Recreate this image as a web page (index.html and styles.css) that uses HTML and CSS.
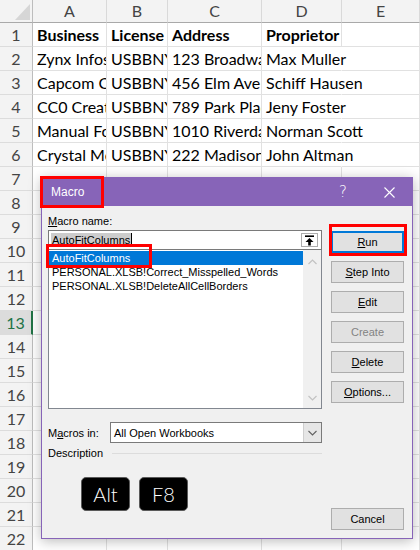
FILE: index.html
```html
<html>
<head>
    <meta charset="utf-8">
    <title>Macro</title>
    <link rel="stylesheet" href="styles.css">
</head>
<body>
	<div class="sheet">
		<div class="row head"><b class="corner"></b><span>A</span><span>B</span><span>C</span><span>D</span><span>E</span></div>
		<div class="row bold"><b class="rh">1</b><span>Business</span><span>License</span><span>Address</span><span>Proprietor</span><span></span></div>
		<div class="row"><b class="rh">2</b><span>Zynx Infosys</span><span>USBBNY</span><span>123 Broadway</span><span class="spill">Max Muller</span><span></span></div>
		<div class="row"><b class="rh">3</b><span>Capcom Co</span><span>USBBNY</span><span>456 Elm Ave</span><span class="spill">Schiff Hausen</span><span></span></div>
		<div class="row"><b class="rh">4</b><span>CC0 Creative</span><span>USBBNY</span><span>789 Park Place</span><span class="spill">Jeny Foster</span><span></span></div>
		<div class="row"><b class="rh">5</b><span>Manual Foods</span><span>USBBNY</span><span>1010 Riverdale</span><span class="spill">Norman Scott</span><span></span></div>
		<div class="row"><b class="rh">6</b><span>Crystal Media</span><span>USBBNY</span><span>222 Madison</span><span class="spill">John Altman</span><span></span></div>
		<div class="row"><b class="rh">7</b><span></span><span></span><span></span><span></span><span></span></div>
		<div class="row"><b class="rh">8</b><span></span><span></span><span></span><span></span><span></span></div>
		<div class="row"><b class="rh">9</b><span></span><span></span><span></span><span></span><span></span></div>
		<div class="row"><b class="rh">10</b><span></span><span></span><span></span><span></span><span></span></div>
		<div class="row"><b class="rh">11</b><span></span><span></span><span></span><span></span><span></span></div>
		<div class="row"><b class="rh">12</b><span></span><span></span><span></span><span></span><span></span></div>
		<div class="row"><b class="rh active">13</b><span></span><span></span><span></span><span></span><span></span></div>
		<div class="row"><b class="rh">14</b><span></span><span></span><span></span><span></span><span></span></div>
		<div class="row"><b class="rh">15</b><span></span><span></span><span></span><span></span><span></span></div>
		<div class="row"><b class="rh">16</b><span></span><span></span><span></span><span></span><span></span></div>
		<div class="row"><b class="rh">17</b><span></span><span></span><span></span><span></span><span></span></div>
		<div class="row"><b class="rh">18</b><span></span><span></span><span></span><span></span><span></span></div>
		<div class="row"><b class="rh">19</b><span></span><span></span><span></span><span></span><span></span></div>
		<div class="row"><b class="rh">20</b><span></span><span></span><span></span><span></span><span></span></div>
		<div class="row"><b class="rh">21</b><span></span><span></span><span></span><span></span><span></span></div>
		<div class="row"><b class="rh">22</b><span></span><span></span><span></span><span></span><span></span></div>
	</div>

	<div class="dialog">
		<div class="titlebar">
			<span class="title">Macro</span>
			<span class="tbtn help">?</span>
			<span class="tbtn close">
				<svg width="11" height="11" viewBox="0 0 11 11"><path d="M0.5 0.5L10.5 10.5M10.5 0.5L0.5 10.5" stroke="#fff" stroke-width="1.1" fill="none"/></svg>
			</span>
		</div>
		<div class="dlgbody">
			<div class="leftcol">
				<div class="label"><u>M</u>acro name:</div>
				<div class="namebox">
					<span class="sel">AutoFitColumns</span><span class="caret"></span>
					<span class="upbtn">
						<svg width="11" height="11" viewBox="0 0 11 11"><path d="M1 1.2H10" stroke="#000" stroke-width="1.6"/><path d="M5.5 3L1.5 7H4.2V10.5H6.8V7H9.5Z" fill="#000"/></svg>
					</span>
				</div>
				<div class="listbox">
					<div class="items">
						<div class="item on">AutoFitColumns</div>
						<div class="item">PERSONAL.XLSB!Correct_Misspelled_Words</div>
						<div class="item">PERSONAL.XLSB!DeleteAllCellBorders</div>
					</div>
					<div class="vscroll">
						<svg width="9" height="6" viewBox="0 0 9 6"><path d="M0.5 5L4.5 1L8.5 5" stroke="#c2c2c2" stroke-width="1.2" fill="none"/></svg>
						<svg width="9" height="6" viewBox="0 0 9 6"><path d="M0.5 1L4.5 5L8.5 1" stroke="#c2c2c2" stroke-width="1.2" fill="none"/></svg>
					</div>
				</div>
				<div class="inrow">
					<span class="inlabel">M<u>a</u>cros in:</span>
					<div class="combo">
						<span class="ctext">All Open Workbooks</span>
						<span class="cbtn">
							<svg width="9" height="6" viewBox="0 0 9 6"><path d="M0.5 1L4.5 5L8.5 1" stroke="#606060" stroke-width="1.1" fill="none"/></svg>
						</span>
					</div>
				</div>
				<div class="descrow"><span>Description</span><i class="rule"></i></div>
				<div class="keys">
					<span class="key">Alt</span>
					<span class="key">F8</span>
				</div>
			</div>
			<div class="rightcol">
				<span class="btn default"><u>R</u>un</span>
				<span class="btn"><u>S</u>tep Into</span>
				<span class="btn"><u>E</u>dit</span>
				<span class="btn disabled">Create</span>
				<span class="btn"><u>D</u>elete</span>
				<span class="btn"><u>O</u>ptions...</span>
				<span class="btn cancel">Cancel</span>
			</div>
		</div>
	</div>

	<div class="mark m-title"></div>
	<div class="mark m-item"></div>
	<div class="mark m-run"></div>
</body>
</html>
```

FILE: styles.css
```css
body { margin: 0; width: 420px; height: 550px; overflow: hidden; position: relative; background: #fff; font-family: "Liberation Sans", Arial, sans-serif; }

/* worksheet grid */
.sheet { font-family: Lato, "Liberation Sans", sans-serif; }
.sheet .row { display: grid; grid-template-columns: 33px 74px 61px 94px 80px 78px; height: 24px; }
.sheet .row > * { box-sizing: border-box; border-right: 1px solid #e1e1e1; border-bottom: 1px solid #e1e1e1; overflow: hidden; white-space: nowrap; font-size: 16px; line-height: 23px; padding-left: 4px; color: #000; }
.sheet .row > .spill { overflow: visible; border-right-color: transparent; }
.sheet .bold > span { font-weight: bold; }
.sheet .head { height: 23px; }
.sheet .head > * { background: #f3f3f3; color: #444; font-size: 16px; line-height: 22px; text-align: center; padding: 0; border-right-color: #d9d9d9; border-bottom: 1px solid #a9a9a9; }
.sheet .head .corner { position: relative; border-right: 1px solid #bdbdbd; }
.sheet .head .corner::after { content: ""; position: absolute; left: 15px; top: 4px; width: 15px; height: 16px; background: #d6d6d6; clip-path: polygon(100% 0, 100% 100%, 0 100%); }
.sheet .rh { background: #f3f3f3; color: #444; font-size: 16px; font-weight: normal; text-align: center; padding: 0; border-right: 1px solid #bdbdbd; border-bottom-color: #dcdcdc; }
.sheet .rh.active { background: #dcdcdc; color: #217346; border-right: 2px solid #217346; }

/* macro dialog */
.dialog { position: absolute; left: 41px; top: 177px; width: 372px; height: 362px; box-sizing: border-box; border: 1px solid #8764b8; background: #f0f0f0; box-shadow: 0 2px 12px rgba(0,0,0,.28); font-size: 11px; color: #000; display: flex; flex-direction: column; }
.titlebar { height: 28px; background: #8764b8; color: #fff; display: flex; align-items: center; padding-left: 9px; font-size: 12px; }
.titlebar .title { flex: 1; }
.tbtn { width: 46px; height: 28px; display: flex; align-items: center; justify-content: center; }
.tbtn.help { font-size: 15px; font-family: "DejaVu Sans", sans-serif; font-weight: 200; }

.dlgbody { flex: 1; display: flex; }
.leftcol { width: 274px; margin-left: 6px; display: flex; flex-direction: column; }
.rightcol { width: 73px; margin-left: 9px; padding: 25px 0 8px; display: flex; flex-direction: column; gap: 8px; }

.label { margin-top: 8px; height: 14px; line-height: 14px; }
.namebox { margin-top: 2px; height: 20px; box-sizing: border-box; border: 1px solid #7a7a7a; background: #fff; display: flex; align-items: center; padding-left: 2px; }
.namebox .sel { background: #cccccc; line-height: 14px; padding: 0 1px; }
.namebox .caret { width: 1px; height: 14px; background: #000; }
.namebox .upbtn { margin-left: auto; margin-right: 3px; width: 17px; height: 14px; box-sizing: border-box; border: 1px solid #adadad; display: flex; align-items: center; justify-content: center; }

.listbox { height: 159px; box-sizing: border-box; border: 1px solid #828790; border-top: 0; background: #fff; display: flex; }
.listbox .items { flex: 1; padding-top: 1px; }
.listbox .item { height: 14px; line-height: 14px; padding-left: 3px; white-space: nowrap; }
.listbox .item.on { background: #0078d7; color: #fff; }
.vscroll { width: 18px; background: #f0f0f0; display: flex; flex-direction: column; align-items: center; justify-content: space-between; padding: 9px 0 7px; }

.inrow { margin-top: 13px; display: flex; align-items: center; }
.inlabel { width: 62px; }
.combo { flex: 1; height: 21px; box-sizing: border-box; border: 1px solid #7a7a7a; background: #fff; display: flex; align-items: center; }
.combo .ctext { flex: 1; padding-left: 3px; }
.combo .cbtn { width: 17px; height: 19px; background: #e6e6e6; border-left: 1px solid #cfcfcf; display: flex; align-items: center; justify-content: center; }

.descrow { margin-top: 3px; height: 14px; line-height: 14px; display: flex; align-items: center; }
.descrow .rule { flex: 1; height: 1px; background: #dcdcdc; margin-left: 9px; }

.keys { margin: 17px 0 0 33px; display: flex; gap: 9px; }
.key { width: 49px; height: 34px; box-sizing: border-box; border: 1px solid #5a5a5a; border-radius: 5px; background: #000; color: #fff; font-family: Lato, sans-serif; font-weight: 300; font-size: 20px; line-height: 32px; text-align: center; }

.btn { height: 22px; box-sizing: border-box; border: 1px solid #adadad; background: #e1e1e1; line-height: 20px; text-align: center; white-space: nowrap; }
.btn.default { border-color: #0078d7; box-shadow: inset 0 0 0 1px #0078d7; }
.btn.disabled { color: #838383; }
.btn.cancel { margin-top: auto; }

/* red callouts */
.mark { position: absolute; box-sizing: border-box; border: 3px solid #ff0000; }
.m-title { left: 40px; top: 176px; width: 64px; height: 32px; }
.m-item { left: 46px; top: 244px; width: 106px; height: 24px; }
.m-run { left: 329px; top: 224px; width: 78px; height: 32px; }
```
